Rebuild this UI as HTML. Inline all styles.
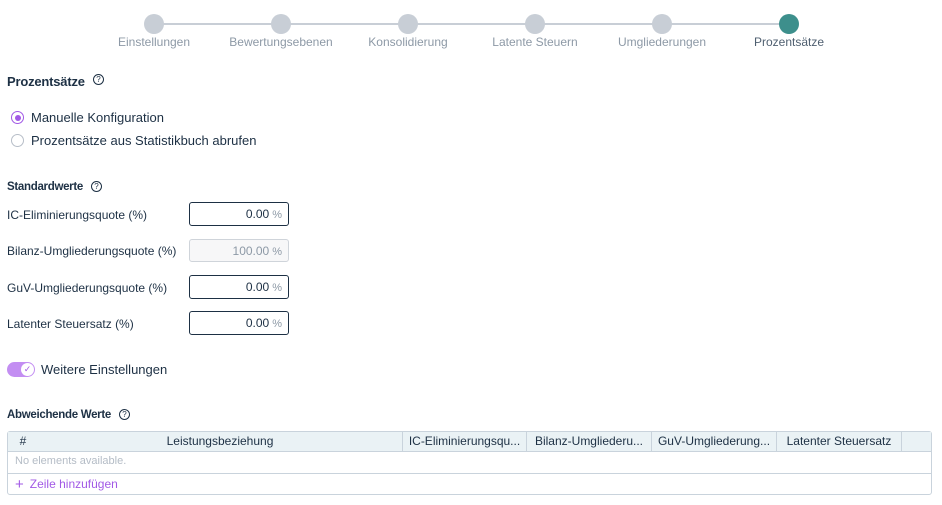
<!DOCTYPE html>
<html><head><meta charset="utf-8"><style>
*{box-sizing:border-box;margin:0;padding:0}
body{width:942px;height:505px;background:#fff;font-family:"Liberation Sans",sans-serif;color:#1d3044;position:relative;overflow:hidden}
.a{position:absolute;white-space:nowrap}
.step{font-size:12px;color:#8d99a6;transform:translateX(-50%);top:35px}
.dot{width:20px;height:20px;border-radius:50%;background:#c8ced6;top:14px}
.h{font-weight:bold;font-size:12.5px;color:#1d3044}
.help{width:11px;height:11px;border:1.2px solid #1d3044;border-radius:50%;font-size:8px;line-height:9px;text-align:center}
.lbl{font-size:12px}
.inp{left:189px;width:100px;height:24px;border:1px solid #1d3044;border-radius:3px;font-size:12px;text-align:right;padding-right:6px;line-height:22px}
.inp span{color:#8d99a6;font-size:11px;margin-left:3px}
.th{top:431px;height:21px;font-size:12px;line-height:21px;text-align:center;border-right:1px solid #c9d3dc;overflow:hidden}
</style></head><body>
<div class="a" style="left:154px;top:23px;width:635px;height:1.5px;background:#c8ced6"></div>
<div class="a dot" style="left:144px"></div>
<div class="a dot" style="left:271px"></div>
<div class="a dot" style="left:398px"></div>
<div class="a dot" style="left:525px"></div>
<div class="a dot" style="left:652px"></div>
<div class="a dot" style="left:779px;background:#3d8f8c"></div>
<div class="a step" style="left:154px">Einstellungen</div>
<div class="a step" style="left:281px">Bewertungsebenen</div>
<div class="a step" style="left:408px">Konsolidierung</div>
<div class="a step" style="left:535px">Latente Steuern</div>
<div class="a step" style="left:662px">Umgliederungen</div>
<div class="a step" style="left:789px;color:#4f5f70">Prozentsätze</div>

<div class="a h" style="left:7px;top:74px;font-size:13px;letter-spacing:-0.2px">Prozentsätze</div>
<div class="a help" style="left:93px;top:74px">?</div>

<div class="a" style="left:11px;top:111px;width:13px;height:13px;border:1.5px solid #a259e6;border-radius:50%"></div>
<div class="a" style="left:14.5px;top:114.5px;width:6px;height:6px;background:#a259e6;border-radius:50%"></div>
<div class="a" style="left:31px;top:110px;font-size:13px">Manuelle Konfiguration</div>
<div class="a" style="left:11px;top:134px;width:13px;height:13px;border:1px solid #b7bec8;border-radius:50%"></div>
<div class="a" style="left:31px;top:133px;font-size:13px">Prozentsätze aus Statistikbuch abrufen</div>

<div class="a h" style="left:7px;top:181px;font-size:11.5px;letter-spacing:-0.3px">Standardwerte</div>
<div class="a help" style="left:91px;top:181px">?</div>

<div class="a lbl" style="left:7px;top:208px">IC-Eliminierungsquote (%)</div>
<div class="a inp" style="top:202px">0.00<span>%</span></div>
<div class="a lbl" style="left:7px;top:244px">Bilanz-Umgliederungsquote (%)</div>
<div class="a inp" style="top:239px;border-color:#cfd4da;background:#f7f7f8;color:#8d99a6;height:23px">100.00<span>%</span></div>
<div class="a lbl" style="left:7px;top:281px">GuV-Umgliederungsquote (%)</div>
<div class="a inp" style="top:275px">0.00<span>%</span></div>
<div class="a lbl" style="left:7px;top:317px">Latenter Steuersatz (%)</div>
<div class="a inp" style="top:311px">0.00<span>%</span></div>

<div class="a" style="left:7px;top:362px;width:28px;height:15px;border-radius:8px;background:#c38ef2"></div>
<div class="a" style="left:21px;top:363px;width:13px;height:13px;border-radius:50%;background:#fff;color:#a259e6;font-size:9px;line-height:13px;text-align:center">✓</div>
<div class="a" style="left:41px;top:362px;font-size:13px">Weitere Einstellungen</div>

<div class="a h" style="left:7px;top:409px;font-size:11.5px;letter-spacing:-0.3px">Abweichende Werte</div>
<div class="a help" style="left:119px;top:409px">?</div>

<div class="a" style="left:7px;top:431px;width:925px;height:64px;border:1px solid #c9d3dc;border-radius:3px"></div>
<div class="a" style="left:8px;top:432px;width:923px;height:20px;background:#eaf2f5;border-bottom:1px solid #c9d3dc"></div>
<div class="a th" style="left:8px;width:30px;border:none">#</div>
<div class="a th" style="left:38px;width:365px">Leistungsbeziehung</div>
<div class="a th" style="left:403px;width:124px">IC-Eliminierungsqu...</div>
<div class="a th" style="left:527px;width:125px">Bilanz-Umgliederu...</div>
<div class="a th" style="left:652px;width:125px">GuV-Umgliederung...</div>
<div class="a th" style="left:777px;width:125px">Latenter Steuersatz</div>
<div class="a" style="left:15px;top:455px;font-size:11px;color:#b4bcc6">No elements available.</div>
<div class="a" style="left:8px;top:473px;width:923px;height:1px;background:#c9d3dc"></div>
<div class="a" style="left:15px;top:475px;font-size:12px;color:#a259e6"><span style="font-size:15px;margin-right:6px;position:relative;top:1px">+</span>Zeile hinzufügen</div>
</body></html>
